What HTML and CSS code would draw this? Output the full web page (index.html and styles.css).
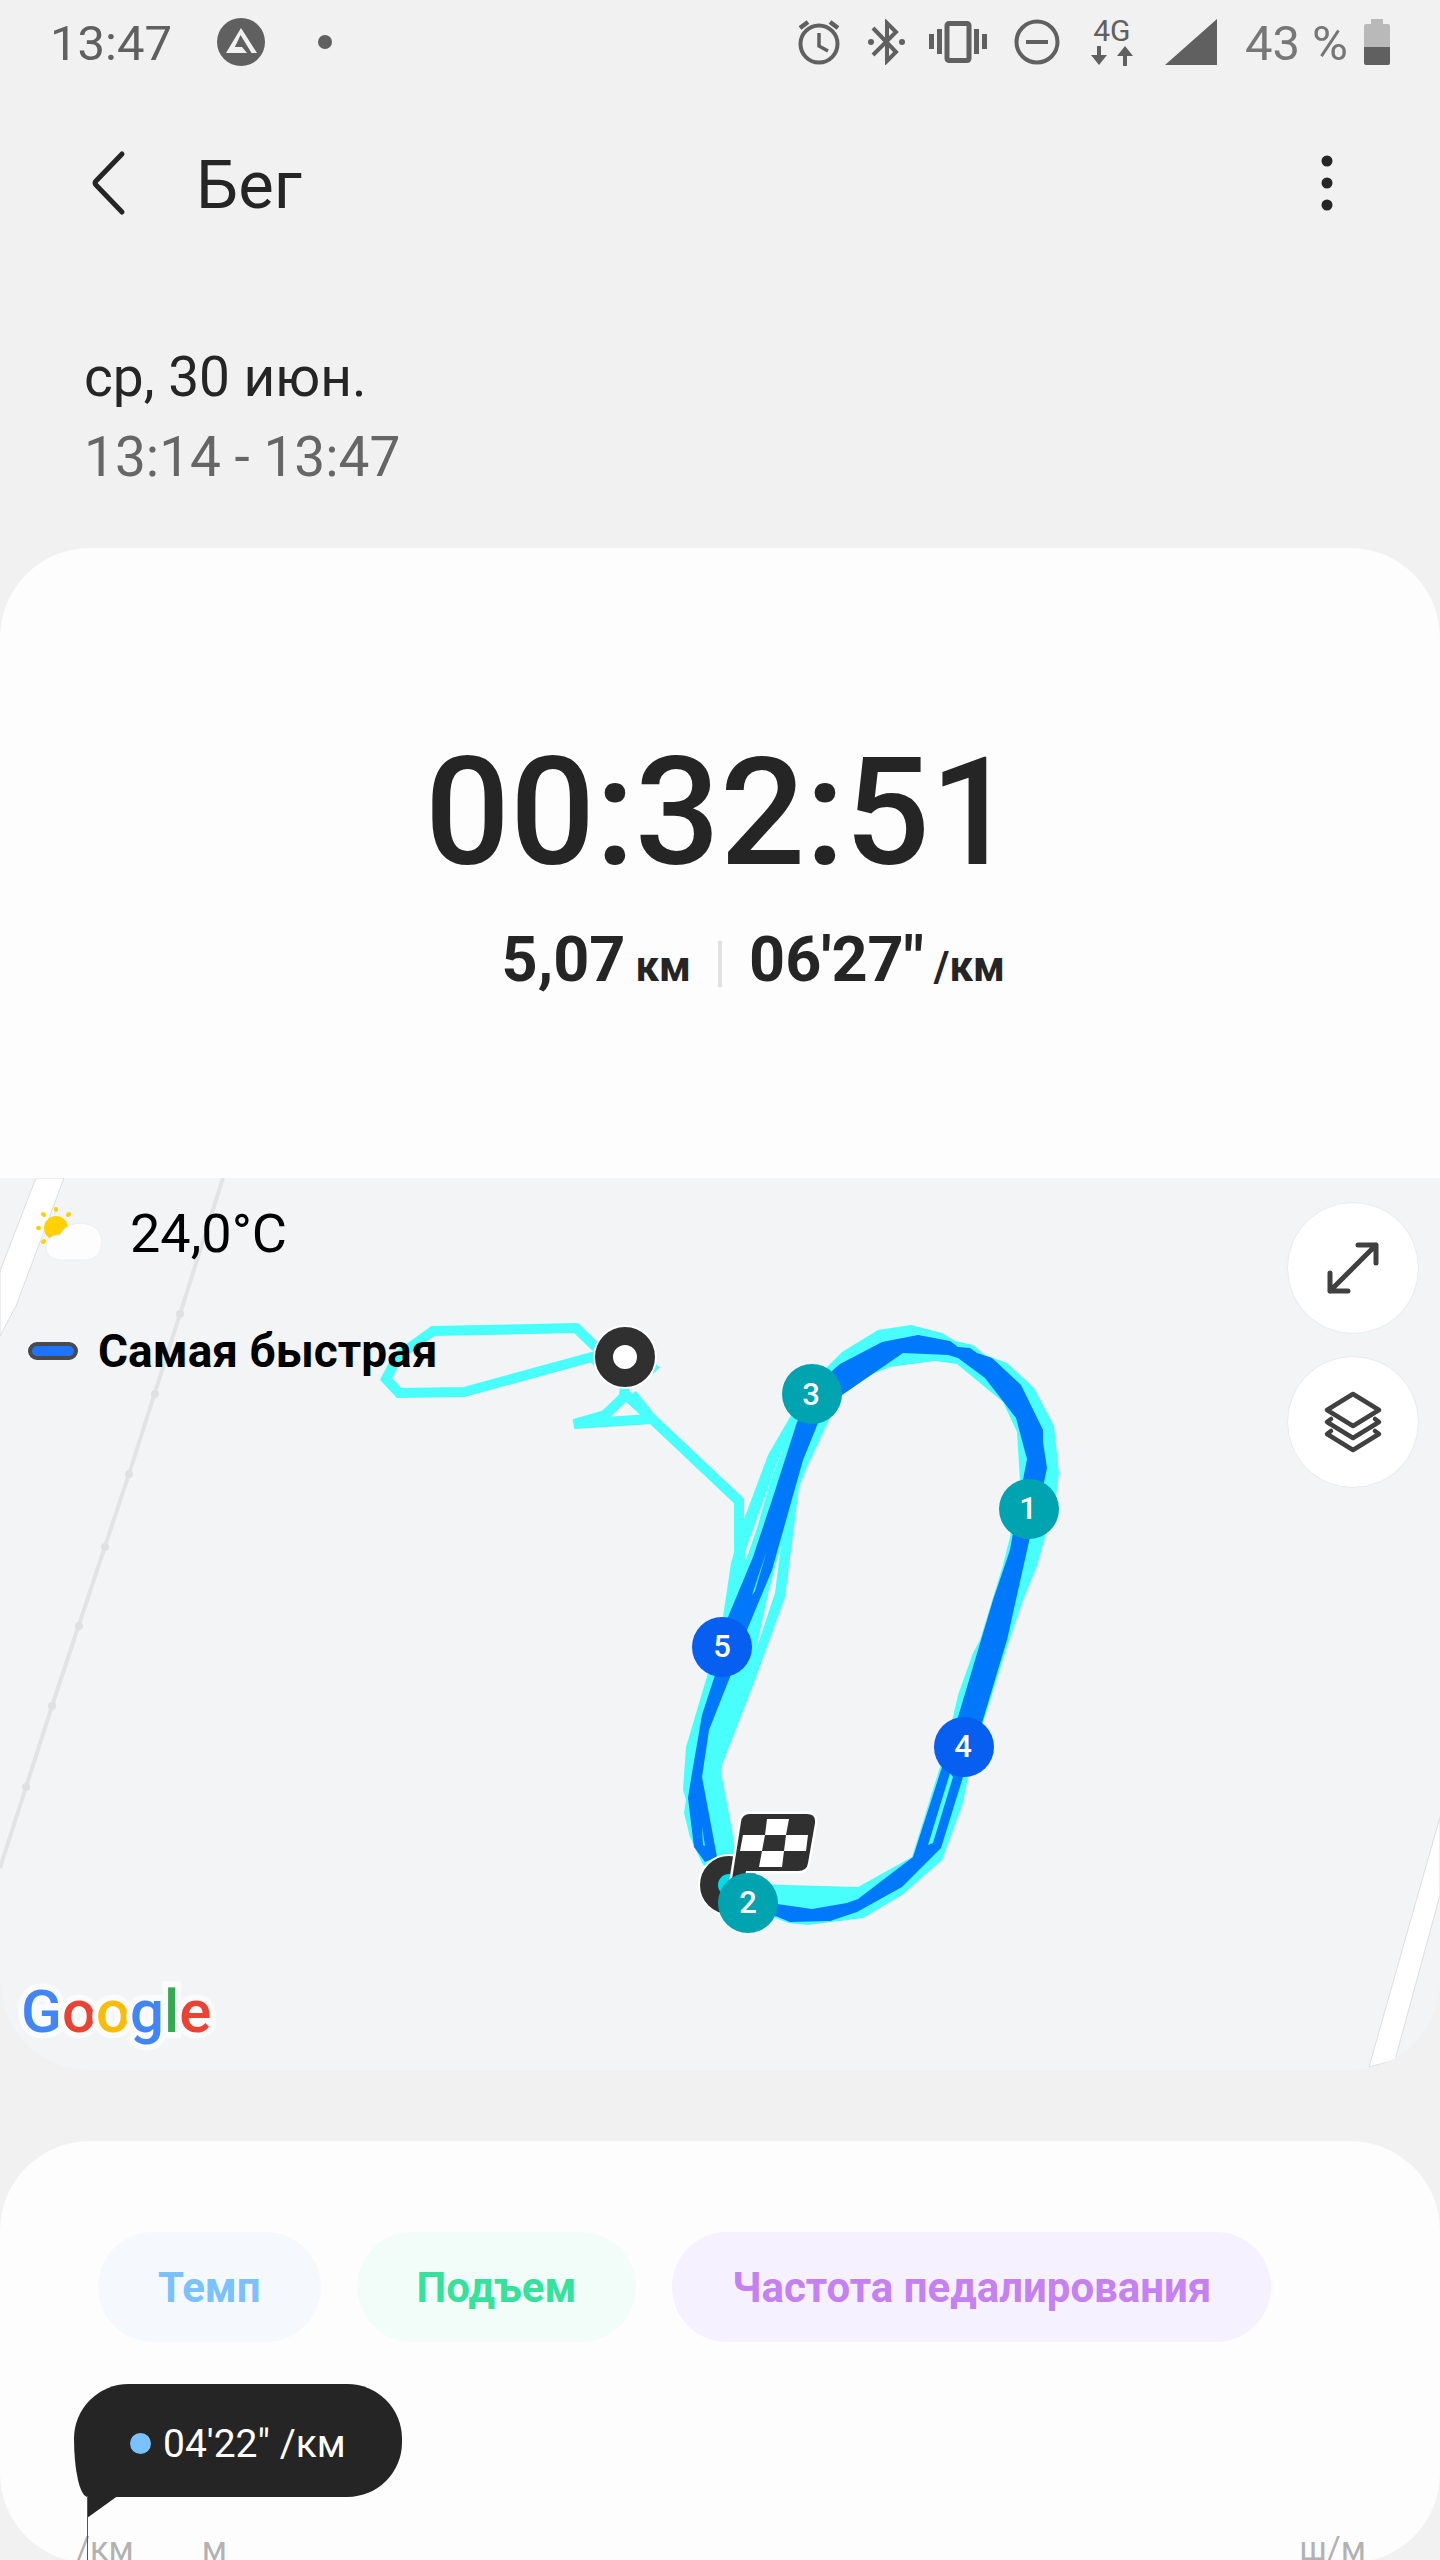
FILE: index.html
```html
<!DOCTYPE html>
<html lang="ru">
<head>
    <meta charset="utf-8">
    <meta name="viewport" content="width=device-width, initial-scale=1">
    <title>Бег</title>
    <link rel="stylesheet" href="styles.css">
</head>
<body>
<div class="app">
    <div class="status">
        <div class="status-left">
            <span class="status-text">13:47</span>
            <svg width="50" height="50" viewBox="0 0 50 50">
                <circle cx="25" cy="25" r="24" fill="#606060"/>
                <path d="M25 11 L41 36 H35.500 L24.500 18 L19 30 H26 L31 36 H10 Z" fill="#f1f1f1"/>
                <path d="M25 20 L19 30 H29 L33 36 H35 Z" fill="#606060"/>
            </svg>
            <svg width="14" height="14" viewBox="0 0 14 14"><circle cx="7" cy="7" r="7" fill="#606060"/></svg>
        </div>
        <div class="status-right">
            <svg width="46" height="46" viewBox="0 0 46 46" fill="none" stroke="#606060">
                <circle cx="22" cy="25" r="18.500" stroke-width="4"/>
                <path d="M22 14 V27 L31 32" stroke-width="3.500"/>
                <path d="M3 9 L11 3 M41 9 L33 3" stroke-width="4.500"/>
            </svg>
            <svg width="38" height="46" viewBox="0 0 38 46" fill="none" stroke="#606060">
                <path d="M6 9 L29 33 L20 42 V4 L29 13 L6 36" stroke-width="4"/>
                <circle cx="4" cy="23" r="3" fill="#606060" stroke="none"/>
                <circle cx="35" cy="23" r="3" fill="#606060" stroke="none"/>
            </svg>
            <svg width="58" height="46" viewBox="0 0 58 46" fill="#606060">
                <rect x="18" y="4.500" width="22" height="37" rx="2" fill="none" stroke="#606060" stroke-width="5"/>
                <path d="M0 15h5v15h-5z M8 10h5v25h-5z M45 10h5v25h-5z M53 15h5v15h-5z"/>
            </svg>
            <svg width="52" height="46" viewBox="0 0 52 46" fill="none" stroke="#606060" stroke-width="4">
                <circle cx="26" cy="23" r="20.500"/>
                <path d="M15 23 H37"/>
            </svg>
            <div class="network">
                <span>4G</span>
                <svg width="46" height="20" viewBox="0 0 46 20" fill="#606060">
                    <path d="M8 0h4v9h6l-8 10l-8-10h6z M34 20h4v-10h6l-8-10l-8 10h6z"/>
                </svg>
            </div>
            <svg width="60" height="46" viewBox="0 0 60 46"><path d="M4 46 L56 0 V46 Z" fill="#606060"/></svg>
            <div class="battery">
                <span class="status-text">43 %</span>
                <svg width="26" height="46" viewBox="0 0 26 46">
                    <path d="M7 0h12v5h5q2 0 2 2v21h-26v-21q0-2 2-2h5z" fill="#b9b9b9"/>
                    <path d="M0 28h26v16q0 2-2 2h-22q-2 0-2-2z" fill="#606060"/>
                </svg>
            </div>
        </div>
    </div>

    <header class="topbar">
        <button class="icon-btn" aria-label="Назад">
            <svg width="36" height="66" viewBox="0 0 36 66"><path d="M31 4 L5 31 Q3 33 5 35 L31 62" fill="none" stroke="#252525" stroke-width="5" stroke-linecap="round"/></svg>
        </button>
        <h1 class="title">Бег</h1>
        <button class="icon-btn" aria-label="Ещё">
            <svg width="14" height="56" viewBox="0 0 14 56" fill="#252525">
                <circle cx="7" cy="6" r="5.500"/><circle cx="7" cy="28" r="5.500"/><circle cx="7" cy="50" r="5.500"/>
            </svg>
        </button>
    </header>

    <div class="dates">
        <div class="date">ср, 30 июн.</div>
        <div class="period">13:14 - 13:47</div>
    </div>

    <section class="summary">
        <div class="clock">00:32:51</div>
        <div class="stats">
            <div class="stat stat-distance"><span>5,07</span><span class="unit">км</span></div>
            <div class="divider"></div>
            <div class="stat"><span>06'27"</span><span class="unit">/км</span></div>
        </div>
    </section>

    <section class="map">
        <svg class="map-canvas" viewBox="0 1178 1440 892" preserveAspectRatio="xMidYMid slice">
            <!-- roads -->
            <path d="M36 1178 H64 L16 1306 L0 1336 V1271 Z" fill="#fff" stroke="#dcdee0"/>
            <path d="M1440 1817 L1369 2067 L1395 2060 L1440 1895 Z" fill="#fff" stroke="#dcdee0"/>
            <path d="M223 1178 L180 1314 L129 1474 L52 1706 L0 1868" fill="none" stroke="#e2e3e4" stroke-width="4"/>
            <g fill="#dfe0e1">
                <circle cx="180" cy="1314" r="4"/><circle cx="155" cy="1394" r="4"/><circle cx="129" cy="1474" r="4"/>
                <circle cx="105" cy="1547" r="4"/><circle cx="79" cy="1626" r="4"/><circle cx="52" cy="1706" r="4"/><circle cx="26" cy="1787" r="4"/>
            </g>
            <!-- track -->
            <path d="M606 1357 L576 1328 L433 1331 L398 1356 L386 1379 L399 1393 L464 1392 L592 1357 L612 1375 M650 1370 L656 1364 M625 1385 L624 1397 L605 1415 L574 1424 L652 1419 L624 1393 M632 1394 L652 1419 L739 1501 V1570" fill="none" stroke="#48fffb" stroke-width="10"/>
            <path fill="#48fffb" fill-rule="evenodd" d="M723 1617 L731 1563 L743 1522 L768 1455 L790 1417 L827 1367 L842 1352 L878 1330 L911 1325 L942 1333 L955 1341 L973 1345 L985 1355 L1007 1363 L1034 1388 L1054 1426 L1059 1473 L1056 1497 L1037 1566 L1023 1600 L1005 1653 L983 1723 L968 1777 L963 1803 L942 1860 L902 1895 L863 1918 L807 1925 L788 1923 L773 1917 L740 1910 L702 1863 L690 1837 L684 1813 L686 1800 L683 1790 L686 1747 L708 1673 L720 1630 Z
                M870 1375 L890 1367 L935 1361 L957 1364 L1003 1402 L1017 1432 L1020 1480 L1010 1537 L1003 1565 L980 1640 L973 1653 L958 1695 L953 1717 L940 1767 L912 1857 L858 1887 L783 1885 L740 1883 L732 1830 L721 1772 L722 1765 L755 1680 L785 1597 L799 1487 L807 1467 L830 1418 L842 1395 Z"/>
            <path fill="#f2f4f6" d="M783 1448 L779 1457 L745 1552 V1563 L757 1528 L770 1483 Z M781 1545 L768 1594 L756 1650 L775 1593 Z"/>
            <path fill="#0078fb" d="M728 1617 L753 1557 L773 1497 L797 1422 L833 1370 L840 1364 L882 1342 L918 1335 L950 1341 L958 1347 L970 1348 L977 1353 L992 1358 L1021 1385 L1043 1430 L1043 1442 L1047 1468 L1043 1487 L1030 1537 L1007 1640 L1003 1653 L982 1723 L963 1777 L941 1848 L902 1887 L857 1912 L830 1921 L790 1922 L773 1915 L777 1904 L812 1909 L847 1903 L858 1899 L913 1857 L942 1767 L958 1717 L993 1600 L1010 1550 L1013 1533 L1023 1480 L1027 1459 L1016 1418 L985 1378 L958 1358 L948 1355 L903 1353 L842 1395 L818 1423 L803 1460 L772 1570 L747 1630 L730 1677 L709 1730 L702 1777 L717 1857 L705 1862 L694 1847 L688 1798 L692 1773 L702 1715 L715 1675 Z"/>
            <path fill="#48fffb" d="M767 1550 L752 1595 L755 1591 Z M950 1773 L928 1845 L933 1843 L953 1777 Z M702 1827 L703 1845 L705 1846 Z"/>
            <!-- start -->
            <circle cx="625" cy="1357" r="32" fill="#fff"/>
            <circle cx="625" cy="1357" r="21" fill="none" stroke="#303030" stroke-width="18"/>
            <!-- finish -->
            <circle cx="729" cy="1885" r="31" fill="#fff"/>
            <circle cx="729" cy="1885" r="20" fill="#00dbe8" stroke="#303030" stroke-width="18"/>
            <path d="M741 1822 Q742 1814 750 1814 H807 Q816 1814 815 1823 L808 1863 Q807 1871 798 1871 H746 L742 1892 H730 Z" fill="#303030" stroke="#fff" stroke-width="5" paint-order="stroke"/>
            <path fill="#fff" d="M767 1819 H789 L786 1835 H765 Z M743 1835 H765 L762 1851 H740 Z M786 1835 H808 L806 1851 H784 Z M762 1851 H784 L782 1867 H759 Z"/>
            <!-- km marks -->
            <g class="marks">
                <circle cx="812" cy="1394" r="30" fill="#00a3b0"/><text x="811" y="1405">3</text>
                <circle cx="1029" cy="1509" r="30" fill="#00a3b0"/><text x="1028" y="1519">1</text>
                <circle cx="722" cy="1647" r="30" fill="#065ff0"/><text x="722" y="1657">5</text>
                <circle cx="964" cy="1747" r="30" fill="#065ff0"/><text x="963" y="1757">4</text>
                <circle cx="748" cy="1903" r="30" fill="#00a3b0"/><text x="748" y="1913">2</text>
            </g>
        </svg>
        <div class="map-overlay">
            <div class="map-info">
                <div class="weather">
                    <svg width="70" height="56" viewBox="0 0 70 56">
                        <g stroke="#ffd100" stroke-width="4" stroke-linecap="round">
                            <path d="M24 3v1 M11 8l1 1 M37 8l-1 1 M6 22h1 M11 36l1-1"/>
                        </g>
                        <circle cx="24" cy="22" r="12" fill="#ffd100"/>
                        <path d="M28 54 Q14 53 14 41 Q15 29 28 29 Q34 17 50 17 Q69 19 70 36 Q69 53 55 54 Z" fill="#fdfdfd" stroke="#ebedef"/>
                    </svg>
                    <span>24,0°C</span>
                </div>
                <div class="legend"><span class="legend-key"></span>Самая быстрая</div>
                <div class="google"><span class="g-blue">G</span><span class="g-red">o</span><span class="g-yellow">o</span><span class="g-blue">g</span><span class="g-green">l</span><span class="g-red">e</span></div>
            </div>
            <div class="map-buttons">
                <button class="round-btn" aria-label="Развернуть">
                    <svg width="56" height="56" viewBox="0 0 56 56" fill="none" stroke="#404040" stroke-width="5" stroke-linecap="round" stroke-linejoin="round">
                        <path d="M5 51 L51 5 M33 5 H51 V23 M5 33 V51 H23"/>
                    </svg>
                </button>
                <button class="round-btn" aria-label="Слои">
                    <svg width="60" height="62" viewBox="0 0 60 62" fill="none" stroke="#404040" stroke-width="4.500" stroke-linecap="round" stroke-linejoin="round">
                        <path d="M30 3 L56 19 L30 35 L4 19 Z M8 28 L4 31 L30 47 L56 31 L52 28 M8 40 L4 43 L30 59 L56 43 L52 40"/>
                    </svg>
                </button>
            </div>
        </div>
    </section>

    <section class="chart">
        <div class="chips">
            <button class="chip chip-pace">Темп</button>
            <button class="chip chip-climb">Подъем</button>
            <button class="chip chip-cadence">Частота педалирования</button>
        </div>
        <div class="tooltip"><span class="tooltip-dot"></span>04'22" /км</div>
        <div class="axis">
            <span>/км</span>
            <span>м</span>
            <span class="axis-right">ш/м</span>
        </div>
    </section>
</div>
</body>
</html>
```
FILE: styles.css
```css
* {
    box-sizing: border-box;
}

body {
    margin: 0;
    background-color: #f1f1f1;
    color: #252525;
    font-family: Roboto, "Liberation Sans", sans-serif;
}

button {
    padding: 0;
    border: none;
    background: none;
    font-family: inherit;
    cursor: pointer;
}

svg {
    display: block;
    flex-shrink: 0;
}

.app {
    height: 100vh;
    overflow: hidden;
}

/* status bar */
.status {
    display: flex;
    justify-content: space-between;
    height: 84px;
    padding: 0 50px;
    color: #606060;
}

.status-left, .status-right, .battery {
    display: flex;
    align-items: center;
}

.status-left {
    gap: 44px;
}

.status-left svg:last-child {
    margin-left: 8px;
}

.status-right {
    gap: 24px;
}

.battery {
    gap: 16px;
    color: #777;
}

.status-text {
    padding-top: 4px;
    font-size: 49px;
    line-height: 56px;
}

.network {
    display: flex;
    flex-direction: column;
    align-items: center;
    gap: 3px;
    width: 50px;
    font-size: 30px;
    line-height: 24px;
}

/* header */
.topbar {
    display: flex;
    align-items: center;
    height: 198px;
    padding: 0 106px 0 91px;
}

.title {
    flex: 1;
    margin: 0;
    padding: 4px 0 0 69px;
    font-size: 67px;
    font-weight: 400;
    line-height: 80px;
}

.dates {
    padding: 55px 84px 51px;
    font-size: 55px;
    line-height: 80px;
}

.period {
    color: #666;
}

/* summary */
.summary {
    height: 630px;
    padding-top: 195px;
    border-radius: 90px 90px 0 0;
    background-color: #fdfdfd;
}

.clock {
    font-size: 150px;
    font-weight: 500;
    line-height: 140px;
    text-align: center;
}

.stats {
    display: grid;
    grid-template-columns: 1fr 4px 1fr;
    align-items: center;
    gap: 27px;
    margin-top: 37px;
}

.stat {
    display: flex;
    align-items: baseline;
    gap: 10px;
    font-size: 63px;
    font-weight: 700;
    line-height: 80px;
}

.stat-distance {
    justify-content: flex-end;
}

.unit {
    font-size: 42px;
}

.divider {
    height: 46px;
    background-color: #e2e2e2;
}

/* map */
.map {
    position: relative;
    height: 892px;
    border-radius: 0 0 90px 90px;
    background-color: #f2f4f6;
    overflow: hidden;
}

.map-canvas {
    width: 100%;
    height: 100%;
}

.marks text {
    fill: #fff;
    font-size: 31px;
    font-weight: 500;
    text-anchor: middle;
}

.map-overlay {
    position: absolute;
    inset: 0;
    display: flex;
    justify-content: space-between;
    padding: 24px 21px 20px;
    color: #000;
}

.map-info {
    display: flex;
    flex-direction: column;
}

.weather {
    display: flex;
    align-items: center;
    gap: 28px;
    padding-left: 11px;
    font-size: 54px;
    line-height: 64px;
}

.legend {
    display: flex;
    align-items: center;
    gap: 20px;
    margin-top: 57px;
    padding-left: 7px;
    font-size: 46px;
    font-weight: 700;
    line-height: 56px;
}

.legend-key {
    width: 50px;
    height: 18px;
    border: 4px solid #4a4a4e;
    border-radius: 9px;
    background-color: #1f74ff;
}

.google {
    margin-top: auto;
    font-size: 60px;
    font-weight: 500;
    line-height: 76px;
    -webkit-text-stroke: 12px #fafbfb;
    paint-order: stroke fill;
}

.g-blue { color: #4285f4; }
.g-red { color: #ea4335; }
.g-yellow { color: #fbbc05; }
.g-green { color: #34a853; }

.map-buttons {
    display: flex;
    flex-direction: column;
    gap: 22px;
}

.round-btn {
    display: flex;
    align-items: center;
    justify-content: center;
    width: 132px;
    height: 132px;
    border: 1px solid #e8eaeb;
    border-radius: 50%;
    background-color: #fff;
}

/* chart */
.chart {
    height: 422px;
    margin-top: 71px;
    padding-top: 91px;
    border-radius: 90px;
    background-color: #fdfdfd;
}

.chips {
    display: flex;
    gap: 36px;
    padding: 0 98px;
}

.chip {
    height: 110px;
    padding: 0 60px;
    border-radius: 55px;
    font-size: 42px;
    font-weight: 700;
    white-space: nowrap;
}

.chip-pace {
    background-color: #f5f9fd;
    color: #7ac1ff;
}

.chip-climb {
    background-color: #f2fdf9;
    color: #35e29c;
}

.chip-cadence {
    background-color: #f5f1fe;
    color: #c580f2;
}

.tooltip {
    position: relative;
    display: flex;
    align-items: center;
    gap: 12px;
    width: fit-content;
    height: 113px;
    margin: 42px 0 0 74px;
    padding: 6px 56px 0;
    border-radius: 56px 56px 56px 14px / 56px 56px 56px 60px;
    background-color: #252525;
    color: #fff;
    font-size: 39px;
}

.tooltip-dot {
    width: 21px;
    height: 21px;
    border-radius: 50%;
    background-color: #7ac1ff;
}

/* pointer and the cursor line under it */
.tooltip::before {
    content: "";
    position: absolute;
    top: 111px;
    left: 13px;
    width: 32px;
    height: 23px;
    background-color: #252525;
    clip-path: polygon(0 0, 100% 0, 0 100%);
}

.tooltip::after {
    content: "";
    position: absolute;
    top: 112px;
    left: 13px;
    width: 1px;
    height: 70px;
    background-color: #555;
}

.axis {
    display: flex;
    gap: 68px;
    margin-top: 31px;
    padding: 0 74px 0 76px;
    color: #b2b2b2;
    font-size: 34px;
    line-height: 40px;
}

.axis-right {
    margin-left: auto;
}
```
